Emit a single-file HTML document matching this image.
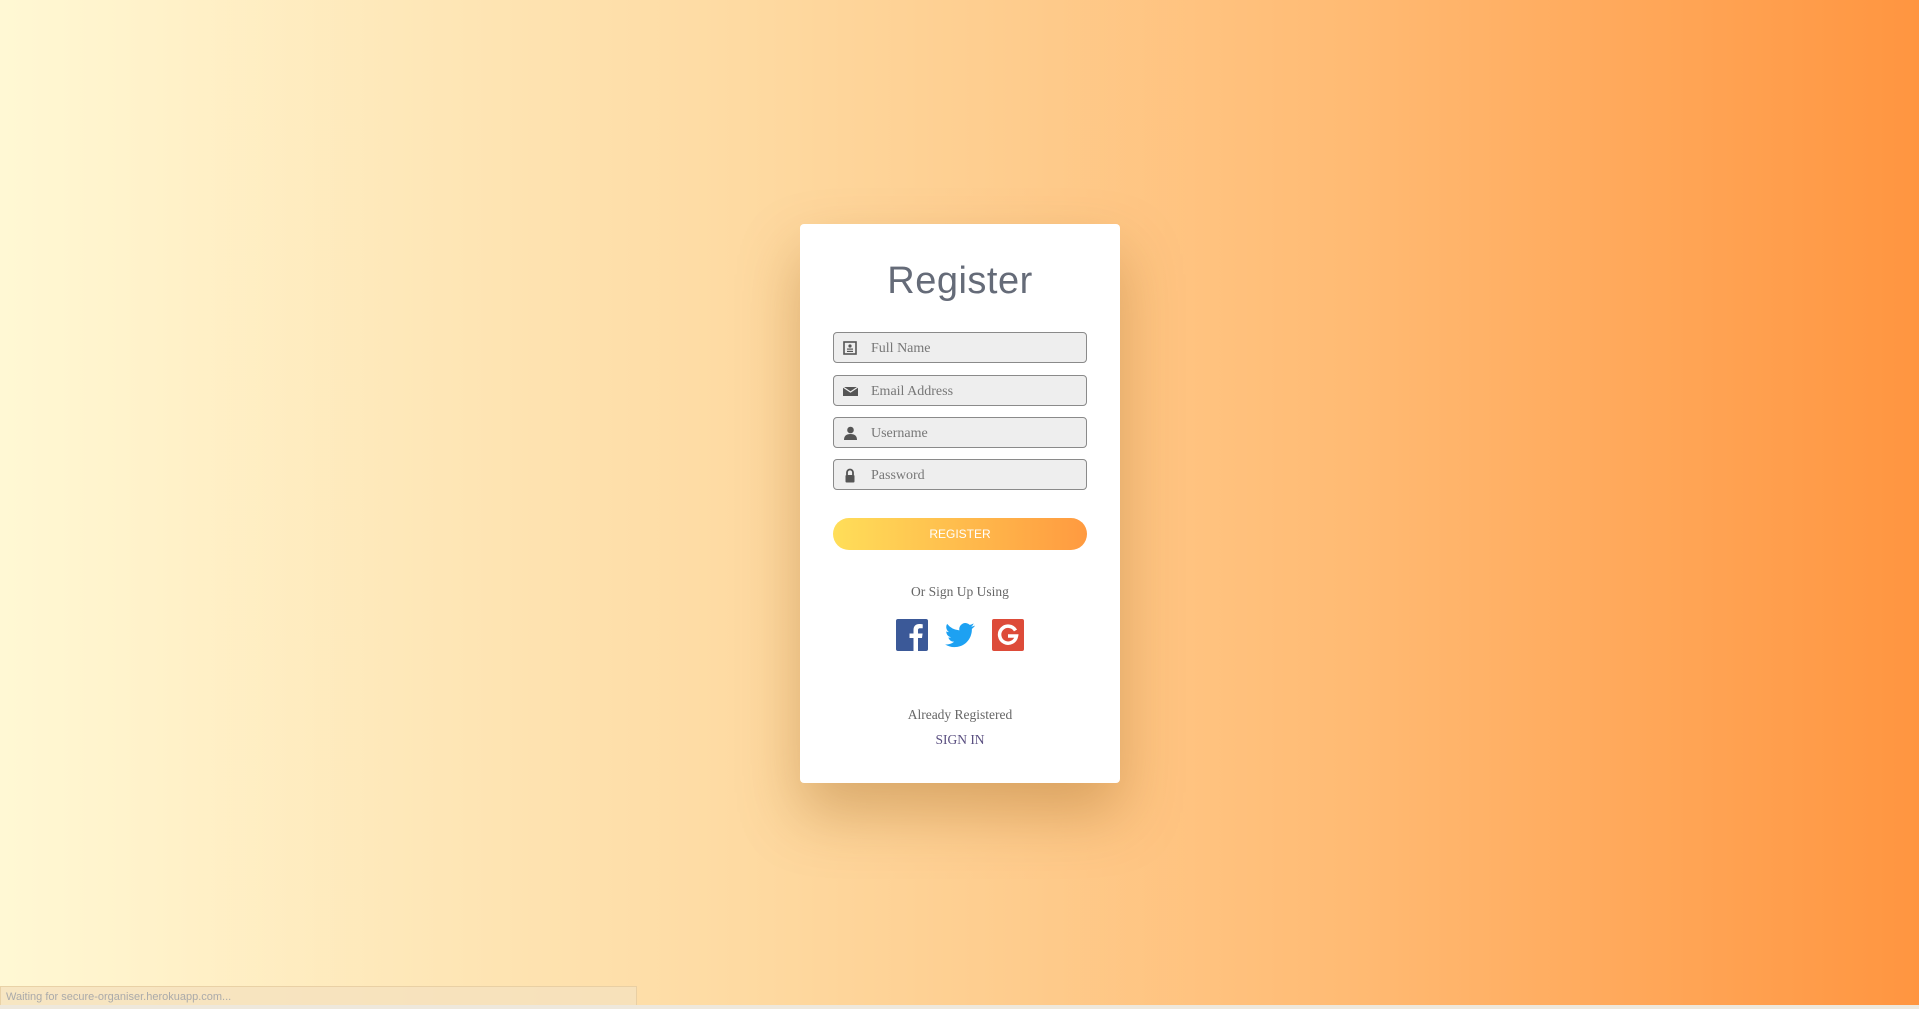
<!DOCTYPE html>
<html><head><style>
html,body{margin:0;padding:0;width:1919px;height:1009px;overflow:hidden}
body{background:linear-gradient(90deg,#fff8d4 0%,#fed9a0 40%,#ffbb74 70%,#ff9540 100%);font-family:"Liberation Serif",serif;position:relative}
.card{position:absolute;left:800px;top:224px;width:320px;height:559px;background:#fff;border-radius:4px;box-shadow:0 30px 60px rgba(150,90,20,.35)}
h1{position:absolute;left:0;right:0;top:36px;margin:0;text-align:center;font:300 38px "Liberation Sans",sans-serif;color:#656b78;letter-spacing:0.5px}
.in{position:absolute;left:33px;width:252px;height:29px;border:1px solid #8a8a8a;border-radius:4px;background:#eee;color:#777;font-size:14px;line-height:31px}
.in span{position:absolute;left:37px}
.in svg{position:absolute;left:9px;top:8px}
.btn{position:absolute;left:33px;top:294px;width:254px;height:32px;border-radius:16px;background:linear-gradient(90deg,#ffde59,#ff9a40);color:#fff;font:12px "Liberation Sans",sans-serif;text-align:center;line-height:32px}
.t{position:absolute;left:0;right:0;text-align:center;font-size:13.5px;color:#666}
.st{position:absolute;left:0;top:986px;width:637px;height:20px;background:rgba(245,225,190,.8);border:1px solid rgba(220,190,140,.5);font:11px "Liberation Sans",sans-serif;color:#aaa;line-height:20px;padding-left:5px;box-sizing:border-box}
</style></head><body>
<div class="card">
<h1>Register</h1>
<div class="in" style="top:108px"><svg width="14" height="14" viewBox="0 0 14 14"><rect x="1" y="1" width="12" height="12" fill="none" stroke="#555" stroke-width="1.6"/><circle cx="7" cy="5" r="1.6" fill="#555"/><rect x="4" y="7.5" width="6" height="1.2" fill="#555"/><rect x="4" y="9.8" width="6" height="1.2" fill="#555"/></svg><span>Full Name</span></div>
<div class="in" style="top:151px"><svg width="15" height="14" viewBox="0 0 15 14"><rect x="0" y="3" width="15" height="9" fill="#555"/><path d="M0 3 L7.5 8 L15 3" stroke="#eee" stroke-width="1.2" fill="none"/></svg><span>Email Address</span></div>
<div class="in" style="top:193px"><svg width="15" height="14" viewBox="0 0 15 14"><circle cx="7.5" cy="4" r="3.3" fill="#555"/><path d="M1 14 Q1 8 7.5 8 Q14 8 14 14Z" fill="#555"/></svg><span>Username</span></div>
<div class="in" style="top:235px"><svg width="14" height="15" viewBox="0 0 14 15"><path d="M4 7 V4.5 A3 3 0 0 1 10 4.5 V7" stroke="#555" stroke-width="1.8" fill="none"/><rect x="2.5" y="7" width="9" height="7.5" rx="1" fill="#555"/></svg><span>Password</span></div>
<div class="btn">REGISTER</div>
<div class="t" style="top:360px">Or Sign Up Using</div>
<svg style="position:absolute;left:96px;top:395px" width="32" height="32" viewBox="0 0 32 32"><rect width="32" height="32" rx="2" fill="#3b5998"/><path d="M22 32 V19 H26 L26.6 14.5 H22 V11.5 C22 10.2 22.4 9.3 24.3 9.3 H26.7 V5.3 C26.3 5.2 24.9 5 23.3 5 C19.8 5 17.5 7.1 17.5 11 V14.5 H13.5 V19 H17.5 V32Z" fill="#fff"/></svg>
<svg style="position:absolute;left:144px;top:396px" width="32" height="30" viewBox="0 0 24 24"><path d="M23.6 4.6c-.9.4-1.8.6-2.8.8 1-.6 1.8-1.6 2.1-2.7-1 .6-2 1-3.1 1.2A4.9 4.9 0 0 0 11.5 8.3 13.9 13.9 0 0 1 1.7 3.1a4.9 4.9 0 0 0 1.5 6.6c-.8 0-1.6-.3-2.2-.6 0 2.4 1.7 4.4 3.9 4.8-.7.2-1.5.2-2.2.1.6 2 2.4 3.4 4.6 3.4A9.9 9.9 0 0 1 0 19.5 14 14 0 0 0 7.5 21.7c9.1 0 14-7.5 14-14v-.6c1-.7 1.8-1.6 2.5-2.5z" fill="#1da1f2"/></svg>
<svg style="position:absolute;left:192px;top:395px" width="32" height="32" viewBox="0 0 32 32"><rect width="32" height="32" rx="2" fill="#dd4b39"/><path d="M23.5 11.5 A8.5 8.5 0 1 0 24.5 17 H16" stroke="#fff" stroke-width="3.5" fill="none"/></svg>
<div class="t" style="top:483px">Already Registered</div>
<div class="t" style="top:508px;color:#5a4f80">SIGN IN</div>
</div>
<div class="st">Waiting for secure-organiser.herokuapp.com...</div>
<div style="position:absolute;left:0;top:1005px;width:1919px;height:4px;background:#eee8dc"></div>
</body></html>
